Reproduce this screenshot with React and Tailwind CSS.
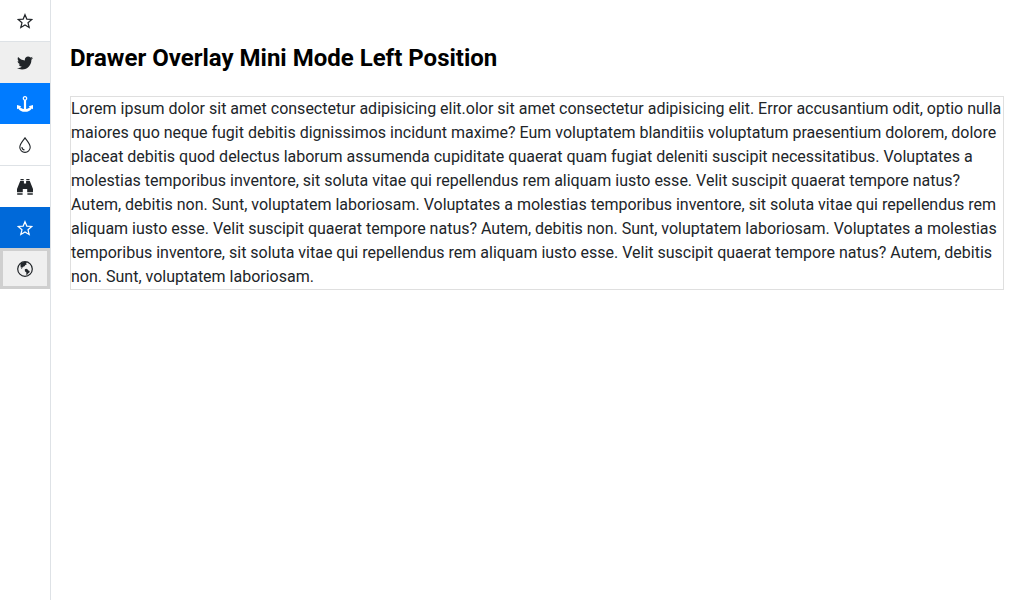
import { FaTwitter } from "react-icons/fa";

function Star() {
  return (
    <svg viewBox="0 0 16 16" className="size-4" fill="none" stroke="currentColor" strokeWidth="1.2" aria-hidden="true">
      <path d="M8 1.700 9.800 6.100l4.900.4-3.700 3.200 1.200 4.800L8 12l-4.200 2.500L5 9.700 1.300 6.500l4.900-.4Z" strokeMiterlimit="8" />
    </svg>
  );
}

function Anchor() {
  return (
    <svg viewBox="0 0 16 16" className="size-4" fill="currentColor" aria-hidden="true">
      <path
        fillRule="evenodd"
        d="M8 0a2.400 2.400 0 0 1 1.100 4.500v8.400c1.800-.2 3.100-.8 3.800-1.600L11.700 10.200 16 9v4.300l-1.200-.9C13.400 14.600 10.900 15.800 8 15.800S2.600 14.600 1.200 12.400L0 13.300V9l4.300 1.200-1.200 1.100c.7.8 2 1.400 3.800 1.600V4.500A2.400 2.400 0 0 1 8 0Zm0 1.300a1.100 1.100 0 1 0 0 2.200 1.100 1.100 0 0 0 0-2.200Z"
      />
    </svg>
  );
}

function Droplet() {
  return (
    <svg viewBox="0 0 16 16" className="size-4" fill="none" stroke="currentColor" strokeLinecap="round" aria-hidden="true">
      <path d="M8 .7C6.500 3.400 2.800 6.800 2.800 10.200a5.200 5.200 0 0 0 10.400 0C13.200 6.800 9.500 3.400 8 .7Z" strokeWidth="1.100" strokeLinejoin="round" />
      <path d="M5 10.600c.2 1.200.9 2 2 2.300" strokeWidth="1.300" />
    </svg>
  );
}

function Binoculars() {
  return (
    <svg viewBox="0 0 16 16" className="size-4" fill="currentColor" aria-hidden="true">
      <path d="M3.500 0h3.200v1.200H3.500ZM9.300 0h3.200v1.200H9.300ZM3.200 2h3.700v2.500h2.200V2h3.700L16 10v3.200h-5.800V10H5.800v3.200H0V10ZM.2 14.200h5.400v1.500H.2ZM10.400 14.200h5.400v1.500h-5.400Z" />
    </svg>
  );
}

function Globe() {
  return (
    <svg viewBox="0 0 16 16" className="size-4" fill="currentColor" aria-hidden="true">
      <circle cx="8" cy="8" r="7.300" fill="none" stroke="currentColor" strokeWidth="1.200" />
      <path d="M3.400 2.800C4.700 1.500 6.500.9 9 1l1 .8-1 .8.900.7-1.500.8-1.200 1.300-1.300.3.200 1.100-1.100-.6-.8.400 1.200 1.300-1.300-.5L3.600 5.600Z" />
      <path d="m7.800 8.300 1.500-.5 1.400.6.700 1.100 1.300.6-.3 1.500-1.400 1-1.100 1.600-.6-.7.100-2-1.500-1.300Z" />
    </svg>
  );
}

const items = [
  { label: "Favorites", icon: <Star />, style: "h-[42px] border-b border-[#dee2e6]" },
  { label: "Twitter", icon: <FaTwitter size={16} />, style: "h-[41px] bg-[#efefef]" },
  { label: "Anchor", icon: <Anchor />, style: "h-[41px] bg-[#007bff] text-white" },
  { label: "Droplet", icon: <Droplet />, style: "h-[42px] border-b border-[#dee2e6]" },
  { label: "Binoculars", icon: <Binoculars />, style: "h-[41px]" },
  { label: "Starred", icon: <Star />, style: "h-[41px] bg-[#0069d9] text-white" },
  { label: "World", icon: <Globe />, style: "h-[41px] border-3 border-[#cfcfcf] bg-[#efefef]" },
];

export default function App() {
  return (
    <div className="flex min-h-screen bg-white font-[Roboto,sans-serif] text-[#212529]">
      <nav className="flex shrink-0 flex-col border-r border-[#dee2e6]">
        {items.map((item) => (
          <button key={item.label} type="button" aria-label={item.label} className={"flex w-[50px] items-center justify-center " + item.style}>
            {item.icon}
          </button>
        ))}
      </nav>
      <main className="min-w-0 flex-1 pt-11 pr-5 pl-[19px]">
        <h1 className="mb-6 text-2xl/7 font-bold text-black">Drawer Overlay Mini Mode Left Position</h1>
        <p className="border border-[#dfdfdf] text-base/6">
          Lorem ipsum dolor sit amet consectetur adipisicing elit.olor sit amet consectetur adipisicing elit. Error
          accusantium odit, optio nulla maiores quo neque fugit debitis dignissimos incidunt maxime? Eum voluptatem
          blanditiis voluptatum praesentium dolorem, dolore placeat debitis quod delectus laborum assumenda cupiditate
          quaerat quam fugiat deleniti suscipit necessitatibus. Voluptates a molestias temporibus inventore, sit soluta
          vitae qui repellendus rem aliquam iusto esse. Velit suscipit quaerat tempore natus? Autem, debitis non. Sunt,
          voluptatem laboriosam. Voluptates a molestias temporibus inventore, sit soluta vitae qui repellendus rem
          aliquam iusto esse. Velit suscipit quaerat tempore natus? Autem, debitis non. Sunt, voluptatem laboriosam.
          Voluptates a molestias temporibus inventore, sit soluta vitae qui repellendus rem aliquam iusto esse. Velit
          suscipit quaerat tempore natus? Autem, debitis non. Sunt, voluptatem laboriosam.
        </p>
      </main>
    </div>
  );
}
